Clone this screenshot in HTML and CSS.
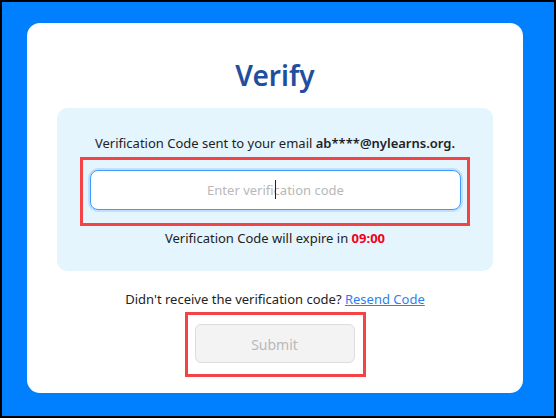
FILE: index.html
```html
<!DOCTYPE html>
<html lang="en">
<head>
<meta charset="utf-8">
<title>Verify</title>
<link rel="stylesheet" href="styles.css">
</head>
<body>
<div class="frame">
  <div class="card">
    <h1 class="title">Verify</h1>
    <div class="panel">
      <p class="sent">Verification Code sent to your email <b>ab****@nylearns.org.</b></p>
      <div class="highlight input-hl">
        <div class="input-wrap">
          <input class="code-input" type="text" placeholder="Enter verification code">
          <span class="caret"></span>
        </div>
      </div>
      <p class="expire">Verification Code will expire in <b class="timer">09:00</b></p>
    </div>
    <p class="resend">Didn't receive the verification code? <a href="#" class="link">Resend Code</a></p>
    <div class="highlight btn-hl">
      <button class="submit" disabled>Submit</button>
    </div>
  </div>
</div>
</body>
</html>
```

FILE: styles.css
```css
* { box-sizing: border-box; }
html, body { margin: 0; padding: 0; }
body {
  font-family: "Noto Sans", "Open Sans", sans-serif;
  color: #222;
}
.frame {
  width: 556px;
  height: 418px;
  border: 2px solid #000;
  background: #0080ff;
  padding: 21px 0 0 25px;
}
.card {
  width: 496px;
  height: 370px;
  background: #fff;
  border-radius: 13px;
  padding: 0 30px;
  display: flex;
  flex-direction: column;
  align-items: center;
}
.title {
  margin: 32px 0 0;
  height: 53px;
  line-height: 40px;
  font-size: 28px;
  font-weight: 600;
  color: #1f4f9e;
}
.panel {
  width: 436px;
  height: 163px;
  background: #e5f5fe;
  border-radius: 10px;
  padding: 25px 23px 0;
  display: flex;
  flex-direction: column;
  align-items: center;
}
.sent {
  margin: 0;
  font-size: 13px;
  line-height: 20px;
  height: 24px;
}
.sent b { font-weight: 600; }
.highlight {
  border: 3px solid #f44346;
}
.input-hl {
  width: 390px;
  height: 69px;
  padding: 10px 6px 0 7px;
}
.input-wrap {
  position: relative;
  width: 371px;
  height: 40px;
}
.code-input {
  width: 100%;
  height: 100%;
  border: 1px solid #3d9cfb;
  border-radius: 8px;
  box-shadow: 0 0 0 2px #bfe0ff;
  outline: none;
  text-align: center;
  font-family: inherit;
  font-size: 13px;
  background: #fff;
}
.code-input::placeholder { color: #b8b8b8; }
.caret {
  position: absolute;
  left: 185px;
  top: 10px;
  width: 1px;
  height: 19px;
  background: #222;
}
.expire {
  margin: 2px 0 0;
  font-size: 13px;
  line-height: 20px;
}
.timer { color: #f2001c; font-weight: 700; }
.resend {
  margin: 18px 0 0;
  font-size: 13px;
  line-height: 20px;
}
.link { color: #2b7ff0; text-decoration: underline; }
.btn-hl {
  margin-top: 3px;
  width: 181px;
  height: 65px;
  padding: 9px 7px 0;
}
.submit {
  width: 160px;
  height: 39px;
  background: #f3f3f3;
  border: 1px solid #dcdcdc;
  border-radius: 6px;
  font-family: inherit;
  font-size: 14px;
  padding-top: 3px;
  color: #b9b9b9;
}
```
